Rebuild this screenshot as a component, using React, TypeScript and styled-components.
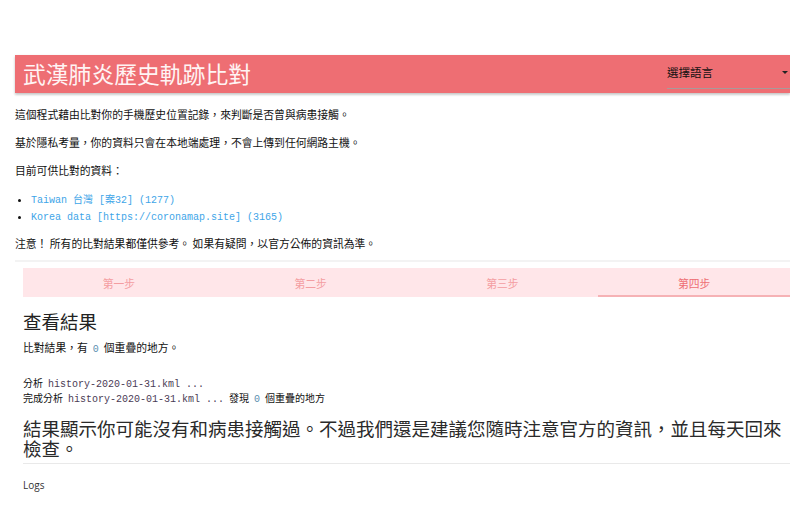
import React from "react";
import styled, { createGlobalStyle } from "styled-components";

const Global = createGlobalStyle`
  html, body { margin: 0; padding: 0; background: #fff; }
  body {
    font-family: "Noto Sans CJK TC", "Noto Sans", sans-serif;
    color: #111;
    overflow: hidden;
  }
`;

const Page = styled.div`
  padding: 55px 0 0 15px;
  width: 775px;
`;

const Header = styled.header`
  height: 38px;
  background: #ee6e73;
  box-shadow: 0 2px 2px rgba(0, 0, 0, 0.14), 0 1px 3px rgba(0, 0, 0, 0.12);
  display: flex;
  align-items: center;
  justify-content: space-between;
  padding-left: 8px;
`;

const Title = styled.h1`
  margin: 0;
  font-size: 22.8px;
  font-weight: 400;
  color: #fff4f4;
  line-height: 1;
`;

const Select = styled.div`
  width: 123px;
  height: 28px;
  margin-top: 2px;
  box-sizing: border-box;
  border-bottom: 1px solid #a89a9a;
  display: flex;
  align-items: center;
  justify-content: space-between;
  font-size: 11.5px;
  line-height: 1;
  color: #111;
  padding-bottom: 4px;
`;

const Caret = styled.span`
  width: 0;
  height: 0;
  border-left: 3px solid transparent;
  border-right: 3px solid transparent;
  border-top: 3px solid #222;
  margin-right: 2px;
`;

const Para = styled.p<{ $last?: boolean }>`
  margin: 0 0 ${(p) => (p.$last ? "8px" : "11px")};
  font-size: 10.8px;
  line-height: 17px;
`;

const Intro = styled.div`
  margin-top: 13px;
`;

const List = styled.ul`
  margin: 0 0 11px;
  padding-left: 16px;
  font-size: 10.8px;
  line-height: 17px;
  li { height: 17px; }
  li::marker { font-size: 9px; }
`;

const Link = styled.a`
  font-family: "Liberation Mono", "Noto Sans CJK TC", monospace;
  font-size: 10px;
  line-height: 1;
  color: #3ea5e8;
  text-decoration: none;
`;

const Rule = styled.div<{ $thick?: boolean }>`
  height: ${(p) => (p.$thick ? "2px" : "1px")};
  background: ${(p) => (p.$thick ? "#f3f3f3" : "#e9e9e9")};
`;

const Card = styled.section`
  padding: 6px 0 0 8px;
`;

const Tabs = styled.div`
  display: grid;
  grid-template-columns: repeat(4, 1fr);
  height: 29px;
  background: #ffe6e9;
`;

const Tab = styled.div<{ $active?: boolean }>`
  display: flex;
  align-items: center;
  justify-content: center;
  font-size: 10.8px;
  color: ${(p) => (p.$active ? "#ee6e73" : "#f49da1")};
  box-shadow: ${(p) => (p.$active ? "inset 0 -2px 0 #f6b2b5" : "none")};
`;

const Heading = styled.h2`
  margin: 12px 0 6px;
  font-size: 18.5px;
  font-weight: 400;
  line-height: 24px;
  color: #222;
`;

const Result = styled.p`
  margin: 0 0 19px;
  font-size: 10.8px;
  line-height: 17px;
`;

const Code = styled.code<{ $num?: boolean }>`
  font-family: "Liberation Mono", monospace;
  font-size: 10px;
  line-height: 1;
  color: ${(p) => (p.$num ? "#5b8fb0" : "#4a3b55")};
  margin: 0 5px;
`;

const LogLine = styled.div`
  font-size: 10px;
  line-height: 15px;
  height: 15px;
`;

const Big = styled.p`
  margin: 13px 0 5px;
  font-size: 18.5px;
  line-height: 20px;
  color: #2a2a2a;
`;

const Logs = styled.div`
  margin-top: 13px;
  font-family: "Open Sans", "Noto Sans", sans-serif;
  font-size: 10px;
  line-height: 16px;
  color: #333;
`;

export default function App() {
  return (
    <>
      <Global />
      <Page>
        <Header>
          <Title>武漢肺炎歷史軌跡比對</Title>
          <Select>
            <span>選擇語言</span>
            <Caret />
          </Select>
        </Header>
        <Intro>
          <Para>這個程式藉由比對你的手機歷史位置記錄，來判斷是否曾與病患接觸。</Para>
          <Para>基於隱私考量，你的資料只會在本地端處理，不會上傳到任何網路主機。</Para>
          <Para>目前可供比對的資料：</Para>
          <List>
            <li>
              <Link href="#">Taiwan 台灣 [案32] (1277)</Link>
            </li>
            <li>
              <Link href="#">Korea data [https://coronamap.site] (3165)</Link>
            </li>
          </List>
          <Para $last>注意！ 所有的比對結果都僅供參考。 如果有疑問，以官方公佈的資訊為準。</Para>
        </Intro>
        <Rule $thick />
        <Card>
          <Tabs>
            <Tab>第一步</Tab>
            <Tab>第二步</Tab>
            <Tab>第三步</Tab>
            <Tab $active>第四步</Tab>
          </Tabs>
          <Heading>查看結果</Heading>
          <Result>
            比對結果，有<Code $num>0</Code>個重疊的地方。
          </Result>
          <LogLine>
            分析<Code>history-2020-01-31.kml ...</Code>
          </LogLine>
          <LogLine>
            完成分析<Code>history-2020-01-31.kml ...</Code>發現<Code $num>0</Code>個重疊的地方
          </LogLine>
          <Big>
            結果顯示你可能沒有和病患接觸過。不過我們還是建議您隨時注意官方的資訊，並且每天回來檢查。
          </Big>
          <Rule />
          <Logs>Logs</Logs>
        </Card>
      </Page>
    </>
  );
}
